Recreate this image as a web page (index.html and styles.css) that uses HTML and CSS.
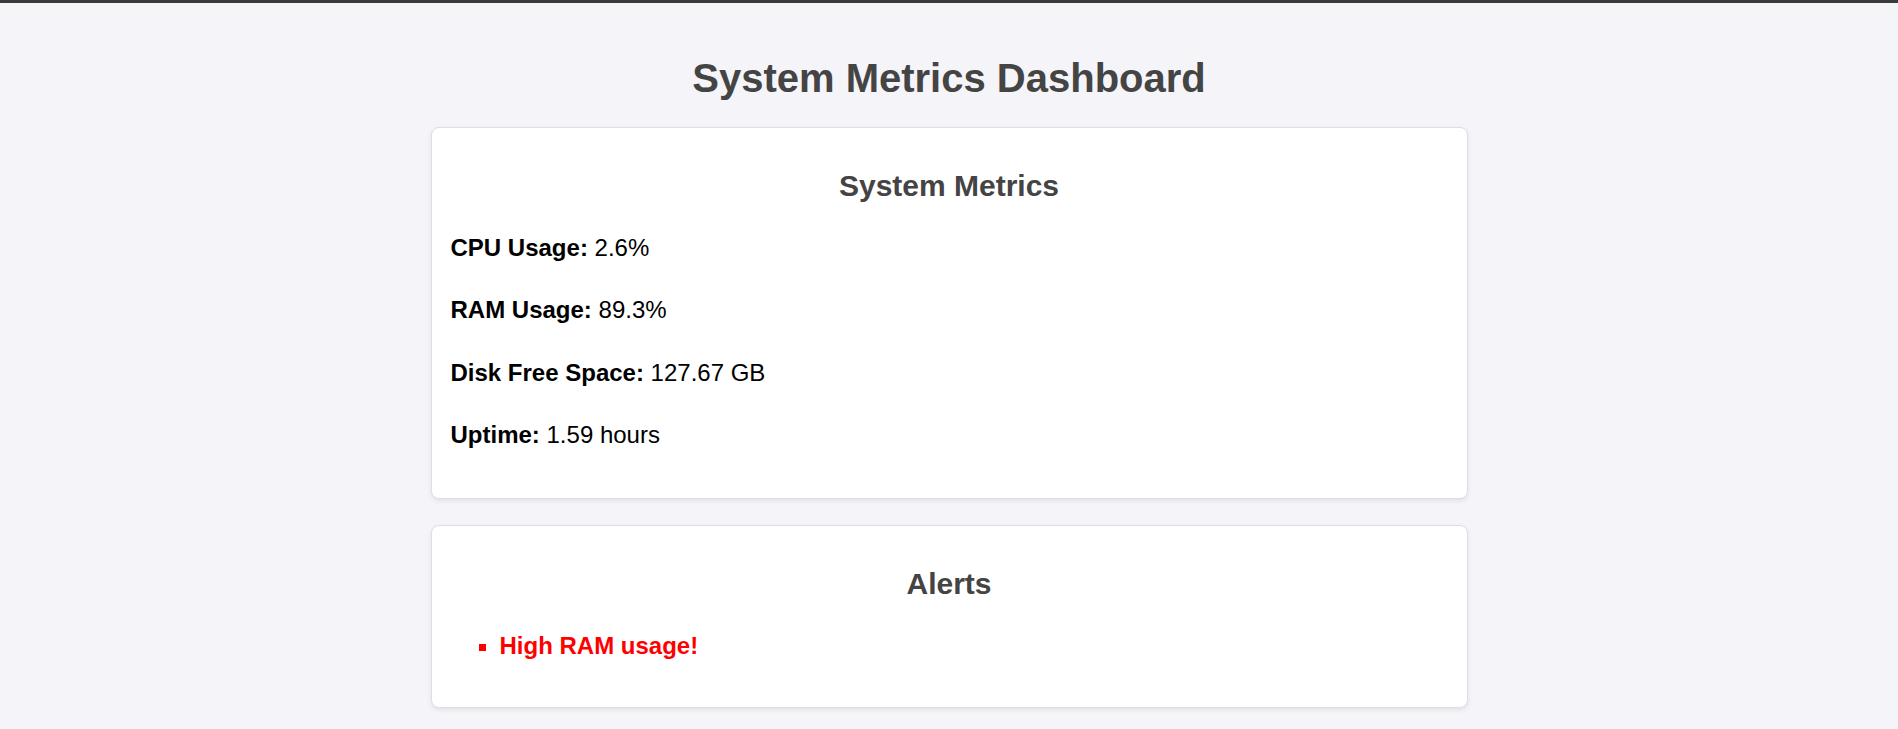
FILE: index.html
```html
<!DOCTYPE html>
<html lang="en">
<head>
<meta charset="utf-8">
<title>System Metrics Dashboard</title>
<link rel="stylesheet" href="styles.css">
</head>
<body>
<div class="topbar"></div>
<main class="page">
  <h1 class="title">System Metrics Dashboard</h1>
  <section class="card">
    <h2 class="card-title">System Metrics</h2>
    <p class="metric"><strong>CPU Usage:</strong> 2.6%</p>
    <p class="metric"><strong>RAM Usage:</strong> 89.3%</p>
    <p class="metric"><strong>Disk Free Space:</strong> 127.67 GB</p>
    <p class="metric"><strong>Uptime:</strong> 1.59 hours</p>
  </section>
  <section class="card">
    <h2 class="card-title">Alerts</h2>
    <ul class="alerts">
      <li class="alert">High RAM usage!</li>
    </ul>
  </section>
</main>
</body>
</html>
```
FILE: styles.css
```css
html, body {
  margin: 0;
  padding: 0;
}

body {
  background: #f4f4f9;
  font-family: "Liberation Sans", Arial, sans-serif;
  color: #000;
}

.topbar {
  height: 3px;
  background: #3b3b3b;
}

.page {
  padding: 25px 0 0;
}

.title {
  margin: 27px 0 26px;
  font-size: 40px;
  line-height: 46px;
  font-weight: bold;
  color: #444;
  text-align: center;
}

.card {
  box-sizing: border-box;
  width: 1037px;
  margin: 0 auto 26px;
  padding: 19px 19px 20px;
  background: #fff;
  border: 1px solid #dedee3;
  border-radius: 8px;
  box-shadow: 0 2px 5px rgba(0, 0, 0, 0.08);
}

.card:last-child {
  margin-bottom: 12px;
}

.card-title {
  margin: 22px 0 26px;
  font-size: 30px;
  line-height: 34px;
  font-weight: bold;
  color: #444;
  text-align: center;
}

.metric {
  margin: 24px 0;
  font-size: 24px;
  line-height: 38.4px;
}

.metric:last-child {
  margin-bottom: 23px;
}

.metric strong {
  font-weight: bold;
}

.alerts {
  margin: 26px 0 22px;
  padding-left: 49px;
  list-style: square;
  color: #ff0000;
}

.alert {
  font-size: 24px;
  line-height: 38.4px;
  font-weight: bold;
}
```
